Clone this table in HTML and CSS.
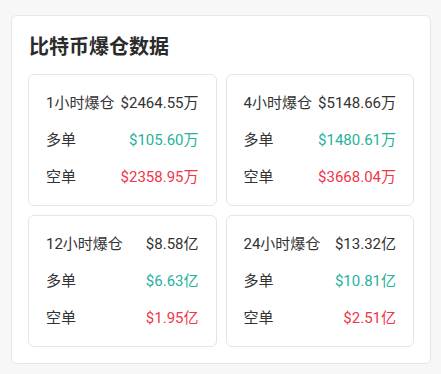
FILE: index.html
```html
<!DOCTYPE html>
<html lang="zh">
<head>
<meta charset="utf-8">
<link rel="stylesheet" href="styles.css">
</head>
<body>
<section class="panel">
  <h2 class="title">比特币爆仓数据</h2>
  <div class="grid">
    <div class="card">
      <div class="row"><span class="label">1小时爆仓</span><span class="val">$2464.55万</span></div>
      <div class="row"><span class="label">多单</span><span class="val up">$105.60万</span></div>
      <div class="row"><span class="label">空单</span><span class="val down">$2358.95万</span></div>
    </div>
    <div class="card">
      <div class="row"><span class="label">4小时爆仓</span><span class="val">$5148.66万</span></div>
      <div class="row"><span class="label">多单</span><span class="val up">$1480.61万</span></div>
      <div class="row"><span class="label">空单</span><span class="val down">$3668.04万</span></div>
    </div>
    <div class="card">
      <div class="row"><span class="label">12小时爆仓</span><span class="val">$8.58亿</span></div>
      <div class="row"><span class="label">多单</span><span class="val up">$6.63亿</span></div>
      <div class="row"><span class="label">空单</span><span class="val down">$1.95亿</span></div>
    </div>
    <div class="card">
      <div class="row"><span class="label">24小时爆仓</span><span class="val">$13.32亿</span></div>
      <div class="row"><span class="label">多单</span><span class="val up">$10.81亿</span></div>
      <div class="row"><span class="label">空单</span><span class="val down">$2.51亿</span></div>
    </div>
  </div>
</section>
</body>
</html>
```
FILE: styles.css
```css
html, body {
  margin: 0;
  padding: 0;
  background: #f7f7f7;
}
body {
  padding: 15px 10px 0 11px;
  font-family: Roboto, "Noto Sans CJK SC", sans-serif;
  color: #333;
}
.panel {
  width: 386px;
  background: #fff;
  border: 1px solid #e6e6e6;
  border-radius: 6px;
  padding: 16px;
}
.title {
  margin: 0 0 14px 1px;
  font-size: 20px;
  line-height: 28px;
  font-weight: 700;
  color: #2b2b2b;
  font-family: "Noto Sans CJK SC", sans-serif;
}
.grid {
  display: grid;
  grid-template-columns: 1fr 1fr;
  gap: 9px;
}
.card {
  border: 1px solid #e5e5e5;
  border-radius: 6px;
  padding: 17px 17px 17px 17px;
  display: flex;
  flex-direction: column;
  gap: 15px;
}
.row {
  display: flex;
  justify-content: space-between;
  align-items: center;
  font-size: 15px;
  line-height: 22px;
  white-space: nowrap;
}
.label {
  color: #333;
}
.val {
  color: #333;
}
.up {
  color: #26b29c;
}
.down {
  color: #f2364a;
}
```
